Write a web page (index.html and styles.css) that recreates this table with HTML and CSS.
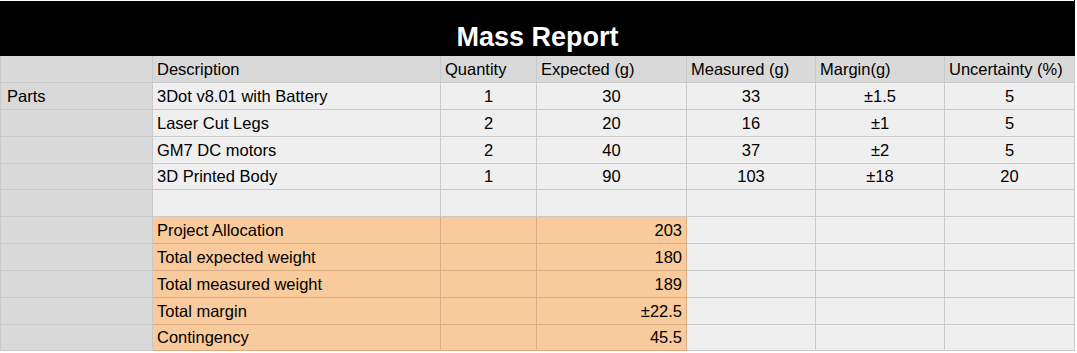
FILE: index.html
```html
<!DOCTYPE html>
<html>
<head>
<meta charset="utf-8">
<link rel="stylesheet" href="styles.css">
</head>
<body>
<table class="report">
  <colgroup>
    <col class="c-a"><col class="c-desc"><col class="c-qty"><col class="c-exp"><col class="c-meas"><col class="c-marg"><col class="c-unc">
  </colgroup>
  <tr class="title-row"><td class="title" colspan="7">Mass Report</td></tr>
  <tr class="head">
    <td class="side"></td><td>Description</td><td>Quantity</td><td>Expected (g)</td><td>Measured (g)</td><td>Margin(g)</td><td>Uncertainty (%)</td>
  </tr>
  <tr>
    <td class="side">Parts</td><td>3Dot v8.01 with Battery</td><td class="num">1</td><td class="num">30</td><td class="num">33</td><td class="num">±1.5</td><td class="num">5</td>
  </tr>
  <tr>
    <td class="side"></td><td>Laser Cut Legs</td><td class="num">2</td><td class="num">20</td><td class="num">16</td><td class="num">±1</td><td class="num">5</td>
  </tr>
  <tr>
    <td class="side"></td><td>GM7 DC motors</td><td class="num">2</td><td class="num">40</td><td class="num">37</td><td class="num">±2</td><td class="num">5</td>
  </tr>
  <tr class="short">
    <td class="side"></td><td>3D Printed Body</td><td class="num">1</td><td class="num">90</td><td class="num">103</td><td class="num">±18</td><td class="num">20</td>
  </tr>
  <tr>
    <td class="side"></td><td></td><td></td><td></td><td></td><td></td><td></td>
  </tr>
  <tr>
    <td class="side"></td><td class="sum">Project Allocation</td><td class="sum"></td><td class="sum val">203</td><td></td><td></td><td></td>
  </tr>
  <tr>
    <td class="side"></td><td class="sum">Total expected weight</td><td class="sum"></td><td class="sum val">180</td><td></td><td></td><td></td>
  </tr>
  <tr>
    <td class="side"></td><td class="sum">Total measured weight</td><td class="sum"></td><td class="sum val">189</td><td></td><td></td><td></td>
  </tr>
  <tr>
    <td class="side"></td><td class="sum">Total margin</td><td class="sum"></td><td class="sum val">±22.5</td><td></td><td></td><td></td>
  </tr>
  <tr class="short">
    <td class="side"></td><td class="sum">Contingency</td><td class="sum"></td><td class="sum val">45.5</td><td></td><td></td><td></td>
  </tr>
</table>
</body>
</html>
```

FILE: styles.css
```css
html, body {
  margin: 0;
  padding: 0;
  background: #ffffff;
}

.report {
  border-collapse: collapse;
  table-layout: fixed;
  width: 1074px;
  font-family: "Liberation Sans", Arial, sans-serif;
  font-size: 16.5px;
  color: #000;
}

.c-a { width: 152px; }
.c-desc { width: 288px; }
.c-qty { width: 96px; }
.c-exp { width: 150px; }
.c-meas { width: 129px; }
.c-marg { width: 129px; }
.c-unc { width: 130px; }

.report tr { height: 27px; }
.report tr.short { height: 26px; }

.report td {
  border: 1px solid #c9c9c9;
  background: #efefef;
  padding: 0 4px 3px 4px;
  line-height: 19px;
  vertical-align: bottom;
  white-space: nowrap;
  overflow: hidden;
}

.report tr.title-row { height: 55px; }

.report td.title {
  background: #000;
  color: #fff;
  border-color: #000;
  border-top-color: #fff;
  font-weight: bold;
  font-size: 27px;
  line-height: 30px;
  text-align: center;
  padding-bottom: 3px;
}

.report tr.head td { background: #d9d9d9; }

.report td.side {
  background: #d9d9d9;
  padding-left: 6px;
}

.report td.num { text-align: center; }

.report td.sum {
  background: #f9cb9c;
  border-color: #d8ad86;
}

.report td.val { text-align: right; }
```
